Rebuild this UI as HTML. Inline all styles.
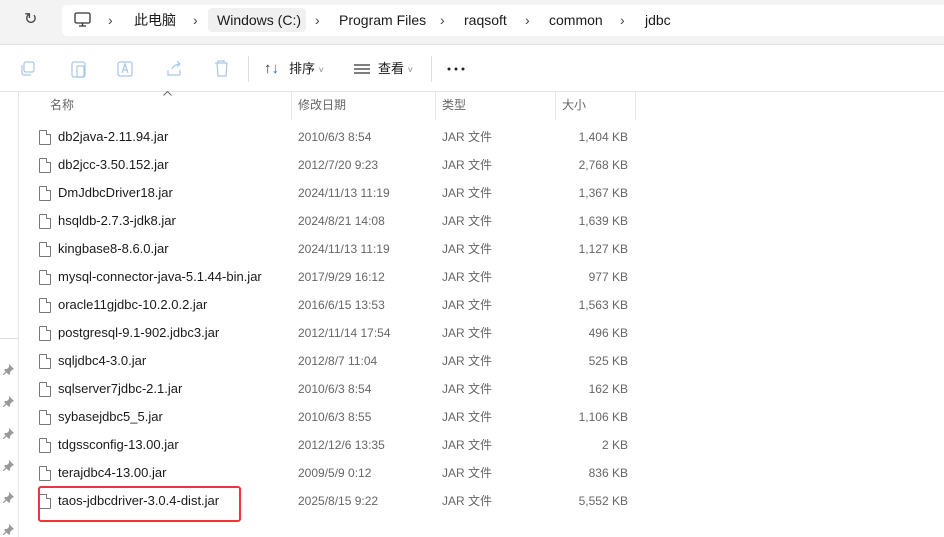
<!DOCTYPE html><html><head><meta charset="utf-8"><style>
body{margin:0;width:944px;height:537px;overflow:hidden;background:#fff;font-family:"Liberation Sans","Noto Sans CJK SC",sans-serif;position:relative;color:#1a1a1a}
.top{position:absolute;left:0;top:0;width:944px;height:44px;background:#f3f3f3;border-bottom:1px solid #e0e0e0}
.crumb{position:absolute;left:62px;top:5px;width:890px;height:31px;background:#fff;border-radius:5px}
.t{position:absolute;font-size:14px;white-space:nowrap;line-height:18px}
.s{position:absolute;font-size:13px;color:#1a1a1a;white-space:nowrap;line-height:16px}
.g{color:#666;font-size:12px}
.vl{position:absolute;width:1px;background:#e5e5e5}
.file{position:absolute;left:39px;width:10px;height:13px;border:1px solid #777;border-radius:1px;background:#fff}
.file:after{content:"";position:absolute;right:-1px;top:-1px;width:4px;height:4px;background:#fff;border-left:1px solid #777;border-bottom:1px solid #777}
.pin{position:absolute;left:3px}
</style></head><body>
<div class="top"><div class="crumb"></div>
<div style="position:absolute;left:208px;top:8px;width:98px;height:24px;background:#f0f0f0;border-radius:4px"></div>
<span class="t" style="left:24px;top:11px;color:#444;font-size:16px">↻</span>
<svg style="position:absolute;left:74px;top:12px" width="17" height="15"><rect x="1" y="1" width="15" height="10" rx="1.5" fill="none" stroke="#333" stroke-width="1.3"/><path d="M5 14h7M8.5 11v3" stroke="#333" stroke-width="1.3"/></svg>
<span class="t" style="left:108px;top:11px;color:#444">›</span>
<span class="t" style="left:134px;top:11px">此电脑</span>
<span class="t" style="left:193px;top:11px;color:#444">›</span>
<span class="t" style="left:217px;top:11px">Windows (C:)</span>
<span class="t" style="left:315px;top:11px;color:#444">›</span>
<span class="t" style="left:339px;top:11px">Program Files</span>
<span class="t" style="left:440px;top:11px;color:#444">›</span>
<span class="t" style="left:464px;top:11px">raqsoft</span>
<span class="t" style="left:525px;top:11px;color:#444">›</span>
<span class="t" style="left:549px;top:11px">common</span>
<span class="t" style="left:620px;top:11px;color:#444">›</span>
<span class="t" style="left:645px;top:11px">jdbc</span>
</div>
<svg style="position:absolute;left:20px;top:58px" width="220" height="22" fill="none" stroke="#a9c6e6" stroke-width="1.2">
<rect x="4" y="4" width="10" height="10" rx="2"/><path d="M2 7v8a2 2 0 0 0 2 2h7"/>
<rect x="52" y="4" width="13" height="15" rx="2"/><rect x="57" y="8" width="7" height="11" rx="1"/>
<rect x="98" y="4" width="14" height="14" rx="2"/><path d="M102 15l3-9 3 9M103 12h4"/>
<path d="M148 12v5h12v-5M152 11c2-4 5-5 8-5M157 3l3 3-3 3"/>
<path d="M195 5h12M198 5v-2h6v2M197 5l1 13h8l1-13"/></svg>
<div class="vl" style="left:248px;top:56px;height:26px;background:#e0e0e0"></div>
<span class="t" style="left:264px;top:60px;color:#333;font-size:15px">↑<span style="color:#1a73c8">↓</span></span>
<span class="s" style="left:289px;top:61px">排序 <span style="color:#888;font-size:9px">˅</span></span>
<svg style="position:absolute;left:354px;top:63px" width="16" height="12" stroke="#333" stroke-width="1.2"><path d="M0 2h16M0 6h16M0 10h16"/></svg>
<span class="s" style="left:378px;top:61px">查看 <span style="color:#888;font-size:9px">˅</span></span>
<div class="vl" style="left:431px;top:56px;height:26px;background:#e0e0e0"></div>
<svg style="position:absolute;left:447px;top:67px" width="20" height="4" fill="#222"><circle cx="2" cy="2" r="1.5"/><circle cx="9" cy="2" r="1.5"/><circle cx="16" cy="2" r="1.5"/></svg>
<div style="position:absolute;left:0;top:91px;width:944px;height:1px;background:#e5e5e5"></div>
<div class="vl" style="left:18px;top:92px;height:445px"></div>
<div style="position:absolute;left:0;top:338px;width:18px;height:1px;background:#ddd"></div>
<svg style="position:absolute;left:163px;top:91px" width="9" height="5" fill="none" stroke="#666"><path d="M0.5 4.5l4-4 4 4"/></svg>
<span class="s g" style="left:50px;top:97px">名称</span>
<span class="s g" style="left:298px;top:97px">修改日期</span>
<span class="s g" style="left:442px;top:97px">类型</span>
<span class="s g" style="left:562px;top:97px">大小</span>
<div class="vl" style="left:291px;top:92px;height:28px"></div><div class="vl" style="left:435px;top:92px;height:28px"></div><div class="vl" style="left:555px;top:92px;height:28px"></div><div class="vl" style="left:635px;top:92px;height:28px"></div>
<div id="rows"></div>
<div style="position:absolute;left:38px;top:486px;width:199px;height:32px;border:2px solid #f0343a;border-radius:3px"></div>
<script>
var d=[["db2java-2.11.94.jar","2010/6/3 8:54","1,404 KB"],["db2jcc-3.50.152.jar","2012/7/20 9:23","2,768 KB"],["DmJdbcDriver18.jar","2024/11/13 11:19","1,367 KB"],["hsqldb-2.7.3-jdk8.jar","2024/8/21 14:08","1,639 KB"],["kingbase8-8.6.0.jar","2024/11/13 11:19","1,127 KB"],["mysql-connector-java-5.1.44-bin.jar","2017/9/29 16:12","977 KB"],["oracle11gjdbc-10.2.0.2.jar","2016/6/15 13:53","1,563 KB"],["postgresql-9.1-902.jdbc3.jar","2012/11/14 17:54","496 KB"],["sqljdbc4-3.0.jar","2012/8/7 11:04","525 KB"],["sqlserver7jdbc-2.1.jar","2010/6/3 8:54","162 KB"],["sybasejdbc5_5.jar","2010/6/3 8:55","1,106 KB"],["tdgssconfig-13.00.jar","2012/12/6 13:35","2 KB"],["terajdbc4-13.00.jar","2009/5/9 0:12","836 KB"],["taos-jdbcdriver-3.0.4-dist.jar","2025/8/15 9:22","5,552 KB"]];
var h="";d.forEach(function(r,i){var y=137+i*28;h+='<div class="file" style="top:'+(y-7)+'px"></div><span class="s" style="left:58px;top:'+(y-8)+'px">'+r[0]+'</span><span class="s g" style="left:298px;top:'+(y-8)+'px">'+r[1]+'</span><span class="s g" style="left:442px;top:'+(y-8)+'px">JAR 文件</span><span class="s g" style="left:556px;width:72px;text-align:right;top:'+(y-8)+'px">'+r[2]+'</span>';});
[370,402,434,466,498,530].forEach(function(y){h+='<svg class="pin" style="top:'+(y-6)+'px" width="11" height="11" fill="#999"><path d="M6 0l5 5-2 1-2 2 0 2-1 1-5-5 1-1 2 0 2-2z"/><path d="M3 8l-3 3" stroke="#999" stroke-width="1.3"/></svg>'});
document.getElementById("rows").innerHTML=h;
</script>
</body></html>
